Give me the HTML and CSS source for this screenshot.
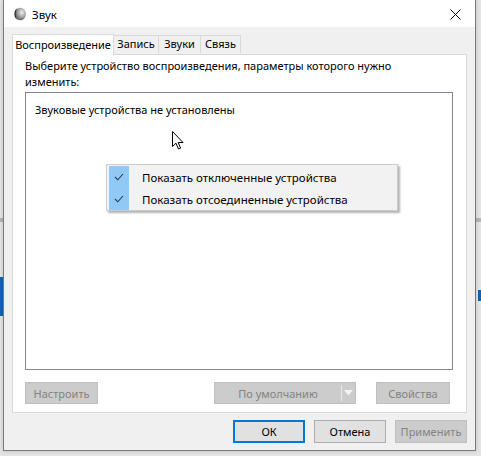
FILE: index.html
```html
<!DOCTYPE html>
<html lang="ru">
<head>
<meta charset="utf-8">
<title>Звук</title>
<link rel="stylesheet" href="styles.css">
</head>
<body>
<div class="desk">
  <div class="bg-band bg-band-left"></div>
  <div class="bg-band bg-band-right"></div>
  <div class="bg-blue bg-blue-left"></div>
  <div class="bg-blue bg-blue-right"></div>

  <div class="window">
    <div class="titlebar">
      <svg class="app-icon" width="12" height="14" viewBox="0 0 12 14">
        <defs>
          <radialGradient id="g1" cx="0.62" cy="0.38" r="0.75">
            <stop offset="0" stop-color="#f2f2f2"/>
            <stop offset="0.5" stop-color="#a0a0a0"/>
            <stop offset="1" stop-color="#4a4a4a"/>
          </radialGradient>
        </defs>
        <ellipse cx="6.5" cy="7" rx="5.3" ry="6.3" fill="url(#g1)"/>
        <path d="M3.8 1.1 A5.3 6.3 0 0 0 3.8 12.9 A3 6.3 0 0 1 3.8 1.1Z" fill="#333"/>
      </svg>
      <span class="title">Звук</span>
      <svg class="close" width="11" height="11" viewBox="0 0 11 11">
        <path d="M0.5 0.5 L10.5 10.5 M10.5 0.5 L0.5 10.5" stroke="#000" stroke-width="1"/>
      </svg>
    </div>
    <div class="client">
      <div class="tabs">
        <div class="tab active">Воспроизведение</div>
        <div class="tab t-rec">Запись</div>
        <div class="tab t-snd">Звуки</div>
        <div class="tab t-com">Связь</div>
      </div>
      <div class="panel">
        <p class="hint">Выберите устройство воспроизведения, параметры которого нужно изменить:</p>
        <div class="list">
          <div class="empty">Звуковые устройства не установлены</div>
        </div>
        <div class="panel-buttons">
          <div class="btn disabled btn-config">Настроить</div>
          <div class="split">
            <div class="btn disabled split-main">По умолчанию
              <span class="split-arrow">
                <svg width="9" height="6" viewBox="0 0 9 6"><path d="M0 0 H9 L4.5 5.5Z" fill="#f4f4f4"/></svg>
              </span>
            </div>
          </div>
          <div class="btn disabled btn-props">Свойства</div>
        </div>
      </div>
      <div class="dialog-buttons">
        <div class="btn default">ОК</div>
        <div class="btn">Отмена</div>
        <div class="btn disabled">Применить</div>
      </div>
    </div>
  </div>

  <div class="menu">
    <div class="menu-item"><span class="check"><svg width="10" height="8" viewBox="0 0 10 8"><path d="M1 4 L3.8 6.8 L9 1" fill="none" stroke="#2a3a4f" stroke-width="1.1"/></svg></span><span class="label">Показать отключенные устройства</span></div>
    <div class="menu-item"><span class="check"><svg width="10" height="8" viewBox="0 0 10 8"><path d="M1 4 L3.8 6.8 L9 1" fill="none" stroke="#2a3a4f" stroke-width="1.1"/></svg></span><span class="label">Показать отсоединенные устройства</span></div>
  </div>

  <svg class="cursor" width="12" height="19" viewBox="0 0 12 19">
    <path d="M0.5 0.5 L0.5 15.5 L4 12.2 L6.5 18 L8.6 17.1 L6.2 11.5 L11 11.5 Z" fill="#fff" stroke="#000" stroke-width="1" stroke-linejoin="miter"/>
  </svg>
</div>
</body>
</html>
```

FILE: styles.css
```css
* { box-sizing: border-box; }
html, body { margin: 0; padding: 0; }
body {
  font-family: "Noto Sans", "Liberation Sans", sans-serif;
  font-size: 11px;
  color: #000;
  background: #e6e6e6;
  width: 481px;
  height: 456px;
  overflow: hidden;
}
.desk {
  position: relative;
  width: 481px;
  height: 456px;
  background: #e4e4e4;
}
.bg-band {
  position: absolute;
  top: 218px;
  height: 4px;
  background: #b5b5b5;
}
.bg-band-left { left: 0; width: 3px; }
.bg-band-right { left: 475px; width: 6px; }
.bg-blue {
  position: absolute;
  background: #0f63b0;
}
.bg-blue-left { left: 0; top: 277px; width: 3px; height: 39px; }
.bg-blue-right { left: 478px; top: 290px; width: 3px; height: 11px; }

.window {
  position: relative;
  margin-left: 3px;
  width: 473px;
  height: 451px;
  background: #f0f0f0;
  border: 1px solid #7a7a7a;
  border-top: none;
  box-shadow: 0 0 4px rgba(0,0,0,0.18);
  display: flex;
  flex-direction: column;
}
.titlebar {
  height: 27px;
  background: #fff;
  display: flex;
  align-items: center;
  padding-left: 10px;
  padding-top: 1px;
}
.app-icon { margin-right: 6px; margin-top: -1px; }
.title { font-size: 11.5px; }
.close { margin-left: auto; margin-right: 14px; margin-top: 1px; }

.client {
  flex: 1;
  padding: 7px 8px 0 8px;
  display: flex;
  flex-direction: column;
}
.tabs {
  display: flex;
  align-items: flex-end;
  height: 20px;
  position: relative;
  z-index: 1;
}
.tab {
  height: 18px;
  border: 1px solid #d9d9d9;
  border-bottom: none;
  border-left: none;
  background: #f0f0f0;
  line-height: 16px;
  text-align: center;
  margin-bottom: 1px;
}
.tab.active {
  width: 102px;
  height: 21px;
  background: #fff;
  border-left: 1px solid #d9d9d9;
  line-height: 19px;
  margin-bottom: -1px;
}
.t-rec { width: 45px; }
.t-snd { width: 42px; }
.t-com { width: 40px; }
.panel {
  height: 359px;
  background: #fff;
  border: 1px solid #d9d9d9;
  padding: 3px 13px 0 12px;
  display: flex;
  flex-direction: column;
}
.hint {
  margin: 0;
  line-height: 16px;
  width: 400px;
}
.list {
  margin-top: 2px;
  height: 278px;
  border: 1px solid #828790;
  padding: 9px 9px;
}
.empty { line-height: 16px; }
.panel-buttons {
  display: flex;
  margin-top: 12px;
  height: 22px;
}
.btn {
  height: 22px;
  border: 1px solid #adadad;
  background: #e1e1e1;
  display: flex;
  align-items: center;
  justify-content: center;
}
.btn.disabled {
  background: #cccccc;
  border-color: #bfbfbf;
  color: #838383;
}
.btn-config { width: 73px; }
.split { margin-left: 116px; }
.split-main {
  width: 142px;
  position: relative;
  padding-right: 14px;
}
.split-arrow {
  position: absolute;
  right: 0;
  top: 2px;
  bottom: 2px;
  width: 14px;
  border-left: 1px solid #e8e8e8;
  display: flex;
  align-items: center;
  justify-content: center;
}
.btn-props { width: 74px; margin-left: 20px; }

.dialog-buttons {
  display: flex;
  justify-content: flex-end;
  gap: 9px;
  margin-top: 7px;
}
.dialog-buttons .btn { width: 72px; height: 23px; }
.btn.default { border: 2px solid #0078d7; }

.menu {
  position: absolute;
  left: 106px;
  top: 164px;
  width: 292px;
  height: 47px;
  background: #f2f2f2;
  border: 1px solid #cccccc;
  padding: 1px 2px;
  box-shadow: 2px 2px 2px rgba(0,0,0,0.3);
}
.menu-item {
  display: flex;
  align-items: center;
  height: 22px;
}
.check {
  width: 20px;
  height: 22px;
  background: #90c8f6;
  display: flex;
  align-items: center;
  justify-content: center;
}
.label { margin-left: 13px; font-size: 11.5px; }

.cursor {
  position: absolute;
  left: 172px;
  top: 131px;
}
```
